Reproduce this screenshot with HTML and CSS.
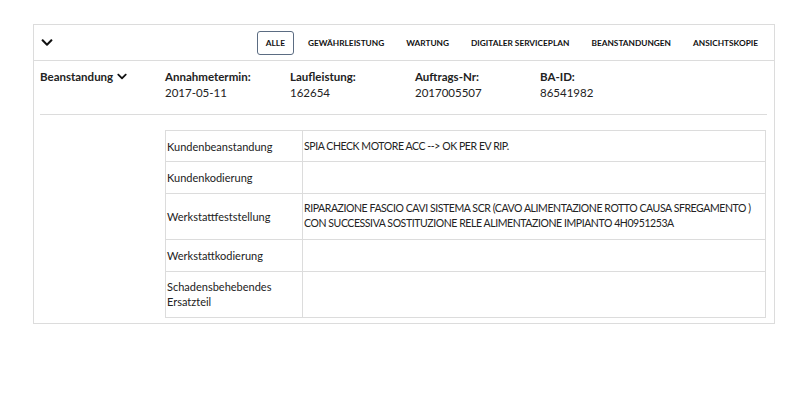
FILE: index.html
```html
<!DOCTYPE html>
<html lang="de">
<head>
    <meta charset="UTF-8">
    <title>Beanstandung</title>
    <link rel="stylesheet" href="styles.css">
</head>
<body>
    <div class="card">
        <header class="card-head">
            <svg class="chevron chevron-big" viewBox="0 0 448 512"><path d="M207 381.5L12.7 187.1c-9.4-9.4-9.4-24.6 0-33.9l22.7-22.7c9.4-9.4 24.5-9.4 33.9 0L224 284.5l154.7-154c9.4-9.3 24.5-9.3 33.9 0l22.7 22.7c9.4 9.4 9.4 24.6 0 33.9L241 381.5c-9.4 9.4-24.6 9.4-34 0z"/></svg>
            <nav class="tabs">
                <a class="tab active" href="#">Alle</a>
                <a class="tab" href="#">Gewährleistung</a>
                <a class="tab" href="#">Wartung</a>
                <a class="tab" href="#">Digitaler Serviceplan</a>
                <a class="tab" href="#">Beanstandungen</a>
                <a class="tab" href="#">Ansichtskopie</a>
            </nav>
        </header>

        <div class="complaint">
            <div class="info-row">
                <div class="info-col title">
                    Beanstandung
                    <svg class="chevron chevron-small" viewBox="0 0 448 512"><path d="M207 381.5L12.7 187.1c-9.4-9.4-9.4-24.6 0-33.9l22.7-22.7c9.4-9.4 24.5-9.4 33.9 0L224 284.5l154.7-154c9.4-9.3 24.5-9.3 33.9 0l22.7 22.7c9.4 9.4 9.4 24.6 0 33.9L241 381.5c-9.4 9.4-24.6 9.4-34 0z"/></svg>
                </div>
                <div class="info-col">
                    <span class="label">Annahmetermin:</span>
                    <span class="value">2017-05-11</span>
                </div>
                <div class="info-col">
                    <span class="label">Laufleistung:</span>
                    <span class="value">162654</span>
                </div>
                <div class="info-col">
                    <span class="label">Auftrags-Nr:</span>
                    <span class="value">2017005507</span>
                </div>
                <div class="info-col">
                    <span class="label">BA-ID:</span>
                    <span class="value">86541982</span>
                </div>
            </div>

            <table class="details">
                <tr>
                    <td class="key">Kundenbeanstandung</td>
                    <td class="text">SPIA CHECK MOTORE ACC --&gt; OK PER EV RIP.</td>
                </tr>
                <tr>
                    <td class="key">Kundenkodierung</td>
                    <td class="text"></td>
                </tr>
                <tr>
                    <td class="key">Werkstattfeststellung</td>
                    <td class="text">RIPARAZIONE FASCIO CAVI SISTEMA SCR (CAVO ALIMENTAZIONE ROTTO CAUSA SFREGAMENTO )<br>CON SUCCESSIVA SOSTITUZIONE RELE ALIMENTAZIONE IMPIANTO 4H0951253A</td>
                </tr>
                <tr>
                    <td class="key">Werkstattkodierung</td>
                    <td class="text"></td>
                </tr>
                <tr>
                    <td class="key">Schadensbehebendes<br>Ersatzteil</td>
                    <td class="text"></td>
                </tr>
            </table>
        </div>
    </div>
</body>
</html>
```

FILE: styles.css
```css
body {
    margin: 0;
    padding: 0;
    font-family: 'Lato', 'Liberation Sans', sans-serif;
    font-size: 11px;
    color: #222;
    background-color: #fff;
}

.card {
    margin: 24px 25px 0 33px;
    border: 1px solid #dcdcdc;
    padding-bottom: 5px;
}

.card-head {
    display: flex;
    justify-content: space-between;
    align-items: center;
    height: 35px;
    padding: 0 5px 0 7px;
    border-bottom: 1px solid #dcdcdc;
}

.chevron {
    fill: #111;
    display: inline-block;
}

.chevron-big {
    width: 12px;
    height: 13px;
}

.chevron-small {
    width: 10px;
    height: 11px;
    vertical-align: -1px;
    margin-left: 1px;
}

.tabs {
    display: flex;
    align-items: center;
}

.tab {
    font-size: 8.3px;
    font-weight: bold;
    text-transform: uppercase;
    text-decoration: none;
    color: #111;
    padding: 7px 10px;
    border: 1px solid transparent;
    border-radius: 3px;
    line-height: 8px;
}

.tab.active {
    border-color: #5b6c82;
    padding: 7px 8px;
    margin-right: 3px;
}

.complaint {
    padding: 0 7px 0 6px;
}

.info-row {
    display: flex;
    padding: 8px 0 13px;
    border-bottom: 1px solid #dcdcdc;
    line-height: 16px;
    font-size: 11.5px;
}

.info-col {
    width: 125px;
    display: flex;
    flex-direction: column;
}

.info-col.title {
    display: block;
    font-weight: bold;
}

.label {
    font-weight: bold;
}

.details {
    margin: 15px 0 0 125px;
    width: calc(100% - 126px);
    border-collapse: collapse;
    line-height: 15px;
}

.details td {
    border: 1px solid #dcdcdc;
    padding: 7.7px 1px;
    vertical-align: middle;
}

.details td.key {
    width: 134px;
}

.details td.text {
    font-size: 10.5px;
    letter-spacing: -0.42px;
    white-space: nowrap;
}
```
